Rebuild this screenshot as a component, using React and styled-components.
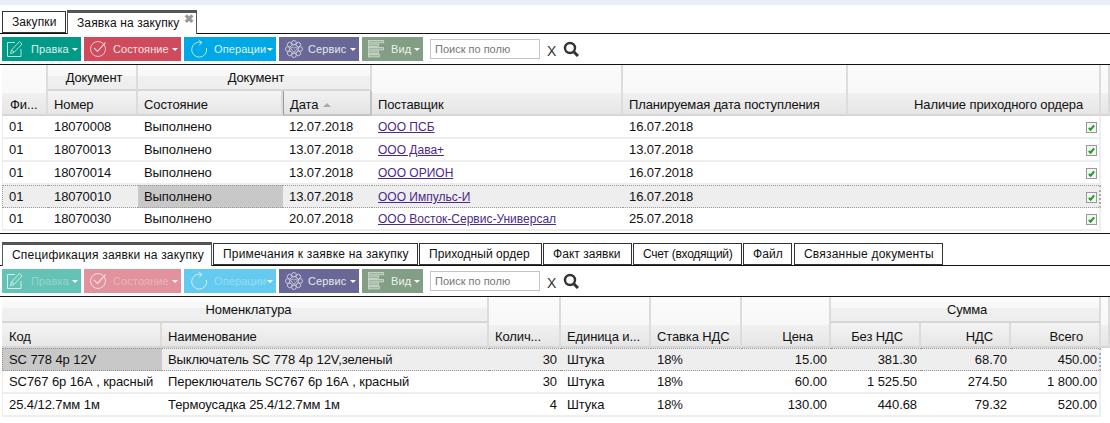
import React from 'react';
import styled, { createGlobalStyle } from 'styled-components';

const Global = createGlobalStyle`
  html, body { margin: 0; padding: 0; background: #fff; }
  body { font-family: "Liberation Sans", Arial, sans-serif; font-size: 12px; color: #111; overflow: hidden; }
`;
const Page = styled.div`width: 1110px; height: 423px; overflow: hidden; display: flex; flex-direction: column;`;
const TopBand = styled.div`height: 5px; background: #e9edf7; margin-bottom: 5px;`;
const Tabs = styled.div`
  display: flex; align-items: flex-end; padding-left: 2px; height: 23px;
  border-bottom: 1px solid #111;
`;
const Tab = styled.div`
  position: relative; box-sizing: border-box; flex: none; width: ${p => p.$w}px; margin-right: ${p => p.$mr}px;
  height: ${p => p.$active ? 24 : 22}px; padding: 0 0 ${p => p.$active ? 2 : 0}px 9px; display: flex; align-items: center;
  border: 1px solid ${p => p.$active ? '#555' : '#333'}; border-bottom: ${p => p.$active ? 'none' : '1px solid #333'};
  border-top: ${p => p.$active ? '3px solid #555' : '1px solid #333'};
  background: #fff; font-size: 12px; white-space: nowrap; margin-bottom: ${p => p.$active ? -1 : 0}px;
  letter-spacing: ${p => p.$ls}px;
`;
const Close = styled.span`position: absolute; right: 2px; top: 0; font-size: 12px; font-weight: bold; color: #999; line-height: 12px;`;
const Toolbar = styled.div`
  display: flex; align-items: center; gap: 3px; padding: 3px 2px; height: 24px;
  border-bottom: 1px solid #111;
`;
const Btn = styled.div`
  width: ${p => p.$w}px; height: 24px; background: ${p => p.$bg}; opacity: ${p => p.$off ? .6 : 1};
  display: flex; align-items: center; color: #fff; font-size: 11px; letter-spacing: .1px; flex: none;
`;
const BtnIcon = styled.span`width: ${p => p.$w}px; flex: none; display: flex; justify-content: center; align-items: center; opacity: .7;`;
const BtnLabel = styled.span`flex: 1; padding-left: ${p => p.$pl}px; opacity: ${p => p.$off ? .3 : .85}; white-space: nowrap;`;
const Caret = styled.span`width: 0; height: 0; border: 3px solid transparent; border-top: 3px solid #fff; border-bottom: 0; margin-right: 3px; flex: none;`;
const Search = styled.div`
  width: 110px; height: 20px; box-sizing: border-box; border: 1px solid #c4c4c4; margin-left: 4px; padding: 0 4px;
  color: #777; font-size: 11px; display: flex; align-items: center; flex: none;
`;
const Clear = styled.span`font-size: 14px; margin-left: 4px; color: #333; position: relative; top: 2px;`;
const SearchGlyph = styled.span`display: flex; margin-left: 4px;`;
const Table = styled.table`
  border-collapse: separate; border-spacing: 0; table-layout: fixed; margin-left: 2px; width: 1108px;
`;
const Th = styled.th`
  box-sizing: border-box; height: ${p => p.$low ? 25 : 26}px; padding: ${p => p.$low ? '3px' : '0'} ${p => p.$pr || 6}px ${p => p.$span ? '2px' : '0'} ${p => p.$pl || 6}px;
  font-weight: normal; font-size: 13px; letter-spacing: -.12px;
  text-align: ${p => p.$a || 'left'}; vertical-align: ${p => p.$span ? 'bottom' : 'middle'};
  border-right: 2px solid #dcdcdc; border-bottom: 2px solid #d6d6d6; overflow: hidden; white-space: nowrap;
  ${p => p.$sort ? 'border-left: 1px solid #999; border-right-color: #c4c4c4; border-bottom-color: #c4c4c4;' : ''}
  background: ${p => p.$sort ? 'linear-gradient(#f2f2f2,#e3e3e3)' : p.$span ? 'linear-gradient(#fbfbfb 0,#f8f8f8 57%,#f0f0f0 58%,#e6e6e6 100%)' : p.$low ? 'linear-gradient(#f4f4f4,#e6e6e6)' : 'linear-gradient(#fbfbfb 0,#f8f8f8 45%,#f0f0f0 47%,#eeeeee 100%)'};
`;
const Td = styled.td`
  box-sizing: border-box; height: 23px; padding: 0 ${p => p.$a === 'right' ? 4 : 6}px 0 6px; font-size: 13px; white-space: nowrap; overflow: hidden;
  text-align: ${p => p.$a || 'left'}; letter-spacing: -.08px;
  border-bottom: ${p => p.$sel ? '1px dotted #999' : '2px solid #eee'};
  ${p => p.$sel ? 'border-top: 1px dotted #999;' : ''}
  background: ${p => p.$cur ? '#c8c8c8' : p.$sel ? '#eeeeee' : '#fff'};
  &:last-child { border-right: 2px ${p => p.$sel ? 'dotted #aaa' : 'solid #eee'}; padding-right: 2px; }
  &:first-child { border-left: 1px ${p => p.$sel ? 'dotted #999' : 'solid #eee'}; }
`;
const Link = styled.a`color: #4b2a8c; text-decoration: underline; font-size: 12px; letter-spacing: 0;`;
const Check = styled.span`
  display: inline-flex; width: 11px; height: 11px; box-sizing: border-box; border: 1px solid #999; background: #f4f4f4; vertical-align: middle;
  align-items: center; justify-content: center;
`;
const Arrow = styled.span`display: inline-block; width: 0; height: 0; margin-left: 5px; border: 4px solid transparent; border-bottom: 4px solid #aaa; border-top: 0; vertical-align: middle;`;
const Divider = styled.div`height: 1px; background: #111; margin: 2px 0 8px;`;

const S = { fill: 'none', stroke: '#fff', strokeWidth: 1 };
const IEdit = () => <svg width="18" height="18" viewBox="0 0 18 18" {...S}><path d="M9 2.500H1.500v14H15V9" /><path d="M4.500 13.500l1-3.500 8-8.500 2.500 2.500-8 8.500z" /><path d="M6 10l2 2" /></svg>;
const ICheck = () => <svg width="18" height="18" viewBox="0 0 18 18" {...S}><circle cx="9" cy="9" r="7.500" /><path d="M5 8l3.500 3.500L16.500 2.500" strokeWidth="1.200" /></svg>;
const IRot = () => <svg width="20" height="20" viewBox="0 0 20 20" {...S}><path d="M12.500 3.500A7.500 7.500 0 1 0 17.500 9" /><path d="M9.500 1l3.500 2.500-3 3" /></svg>;
const petals = [0, 45, 90, 135, 180, 225, 270, 315];
const IGear = () => (
  <svg width="18" height="18" viewBox="0 0 18 18" {...S} strokeWidth=".9">
    {petals.map(a => <circle key={a} cx="9" cy="2.800" r="2.300" transform={`rotate(${a} 9 9)`} />)}
    <circle cx="9" cy="9" r="4.300" fill="#686796" />
    <path d="M9 12.500L5.800 8.600C6.500 6.800 8.300 7 9 8.300 9.700 7 11.500 6.800 12.200 8.600Z" />
  </svg>
);
const bars = [[.5, 15], [4, 10], [7.500, 15], [11, 10], [14.500, 11]];
const IList = () => (
  <svg width="16" height="18" viewBox="0 0 16 18" fill="#fff" fillOpacity=".35" stroke="#fff" strokeWidth=".7">
    {bars.map(([y, w]) => <rect key={y} x=".5" y={y} width={w} height="2.400" />)}
  </svg>
);

const ToolbarRow = ({ off }) => (
  <Toolbar>
    <Btn $w={79} $bg="#009a86" $off={off}><BtnIcon $w={26}><IEdit /></BtnIcon><BtnLabel $pl={3} $off={off}>Правка</BtnLabel><Caret /></Btn>
    <Btn $w={97} $bg="#cf4a5b" $off={off}><BtnIcon $w={28}><ICheck /></BtnIcon><BtnLabel $pl={1} $off={off}>Состояние</BtnLabel><Caret /></Btn>
    <Btn $w={92} $bg="#00a8e6" $off={off}><BtnIcon $w={30}><IRot /></BtnIcon><BtnLabel $pl={0} $off={off}>Операции</BtnLabel><Caret /></Btn>
    <Btn $w={80} $bg="#686796"><BtnIcon $w={29}><IGear /></BtnIcon><BtnLabel $pl={0}>Сервис</BtnLabel><Caret /></Btn>
    <Btn $w={61} $bg="#829e84"><BtnIcon $w={27}><IList /></BtnIcon><BtnLabel $pl={2}>Вид</BtnLabel><Caret /></Btn>
    <Search>Поиск по полю</Search>
    <Clear>X</Clear>
    <SearchGlyph>
      <svg width="16" height="16" viewBox="0 0 16 16" fill="none" stroke="#333" strokeWidth="2.400"><circle cx="7" cy="7" r="5" /><path d="M10.500 10.500L15 15" strokeWidth="3" /></svg>
    </SearchGlyph>
  </Toolbar>
);

const CheckMark = () => <Check><svg width="7" height="7" viewBox="0 0 8 8"><path d="M1 4.500L3 6.500 7 1.500" fill="none" stroke="#22a022" strokeWidth="2.400" /></svg></Check>;

const top = [
  ['01', '18070008', 'Выполнено', '12.07.2018', 'ООО ПСБ', '16.07.2018'],
  ['01', '18070013', 'Выполнено', '13.07.2018', 'ООО Дава+', '13.07.2018'],
  ['01', '18070014', 'Выполнено', '13.07.2018', 'ООО ОРИОН', '16.07.2018'],
  ['01', '18070010', 'Выполнено', '13.07.2018', 'ООО Импульс-И', '16.07.2018'],
  ['01', '18070030', 'Выполнено', '20.07.2018', 'ООО Восток-Сервис-Универсал', '25.07.2018'],
];
const bottom = [
  ['SC 778 4р 12V', 'Выключатель SC 778 4р 12V,зеленый', '30', 'Штука', '18%', '15.00', '381.30', '68.70', '450.00'],
  ['SC767 6р 16А , красный', 'Переключатель SC767 6р 16А , красный', '30', 'Штука', '18%', '60.00', '1 525.50', '274.50', '1 800.00'],
  ['25.4/12.7мм 1м', 'Термоусадка 25.4/12.7мм 1м', '4', 'Штука', '18%', '130.00', '440.68', '79.32', '520.00'],
];
const topW = [46, 90, 145, 89, 251, 225, 253, 9];
const botW = [160, 327, 72, 90, 91, 89, 90, 90, 90, 9];
const lowerTabs = [
  ['Спецификация заявки на закупку', 210, 1, .2, true],
  ['Примечания к заявке на закупку', 205, 1, .2],
  ['Приходный ордер', 123, 1, .05],
  ['Факт заявки', 89, 1, .05],
  ['Счет (входящий)', 109, 1, -.25],
  ['Файл', 49, 2, .1],
  ['Связанные документы', 149, 0, .2],
];

export default function App() {
  return (
    <Page>
      <Global />
      <TopBand />
      <Tabs>
        <Tab $w={64} $mr={1} $ls={.1}>Закупки</Tab>
        <Tab $active $w={130} $mr={0} $ls={.12}>Заявка на закупку<Close>✖</Close></Tab>
      </Tabs>
      <ToolbarRow />
      <Table>
        <colgroup>{topW.map((w, i) => <col key={i} width={w} />)}</colgroup>
        <thead>
          <tr>
            <Th rowSpan={2} $span $pl={8}>Фи...</Th>
            <Th $a="center" $pl={10}>Документ</Th>
            <Th colSpan={2} $a="center" $pl={10}>Документ</Th>
            <Th rowSpan={2} $span>Поставщик</Th>
            <Th rowSpan={2} $span>Планируемая дата поступления</Th>
            <Th rowSpan={2} $span $a="right" $pr={16}>Наличие приходного ордера</Th>
            <Th rowSpan={2} $span $pl={1} $pr={1} />
          </tr>
          <tr>
            <Th $low>Номер</Th>
            <Th $low>Состояние</Th>
            <Th $low $sort>Дата<Arrow /></Th>
          </tr>
        </thead>
        <tbody>
          {top.map((r, i) => (
            <tr key={r[1]}>
              <Td $sel={i === 3}>{r[0]}</Td>
              <Td $sel={i === 3}>{r[1]}</Td>
              <Td $sel={i === 3} $cur={i === 3}>{r[2]}</Td>
              <Td $sel={i === 3}>{r[3]}</Td>
              <Td $sel={i === 3}><Link>{r[4]}</Link></Td>
              <Td $sel={i === 3}>{r[5]}</Td>
              <Td $sel={i === 3} $a="right"><CheckMark /></Td>
            </tr>
          ))}
        </tbody>
      </Table>
      <Divider />
      <Tabs>
        {lowerTabs.map(([t, w, mr, ls, act]) => <Tab key={t} $w={w} $mr={mr} $ls={ls} $active={act}>{t}</Tab>)}
      </Tabs>
      <ToolbarRow off />
      <Table>
        <colgroup>{botW.map((w, i) => <col key={i} width={w} />)}</colgroup>
        <thead>
          <tr>
            <Th colSpan={2} $a="center" $pl={14}>Номенклатура</Th>
            <Th rowSpan={2} $span>Колич...</Th>
            <Th rowSpan={2} $span>Единица и...</Th>
            <Th rowSpan={2} $span>Ставка НДС</Th>
            <Th rowSpan={2} $span $a="right" $pr={16}>Цена</Th>
            <Th colSpan={3} $a="center" $pl={10}>Сумма</Th>
            <Th rowSpan={2} $span $pl={1} $pr={1} />
          </tr>
          <tr>
            <Th $low $pl={7}>Код</Th>
            <Th $low>Наименование</Th>
            <Th $low $a="right" $pr={16}>Без НДС</Th>
            <Th $low $a="right" $pr={16}>НДС</Th>
            <Th $low $a="right" $pr={16}>Всего</Th>
          </tr>
        </thead>
        <tbody>
          {bottom.map((r, i) => (
            <tr key={r[0]}>
              <Td $sel={i === 0} $cur={i === 0}>{r[0]}</Td>
              <Td $sel={i === 0}>{r[1]}</Td>
              <Td $sel={i === 0} $a="right">{r[2]}</Td>
              <Td $sel={i === 0}>{r[3]}</Td>
              <Td $sel={i === 0}>{r[4]}</Td>
              {r.slice(5).map((v, j) => <Td key={j} $sel={i === 0} $a="right">{v}</Td>)}
            </tr>
          ))}
        </tbody>
      </Table>
    </Page>
  );
}
